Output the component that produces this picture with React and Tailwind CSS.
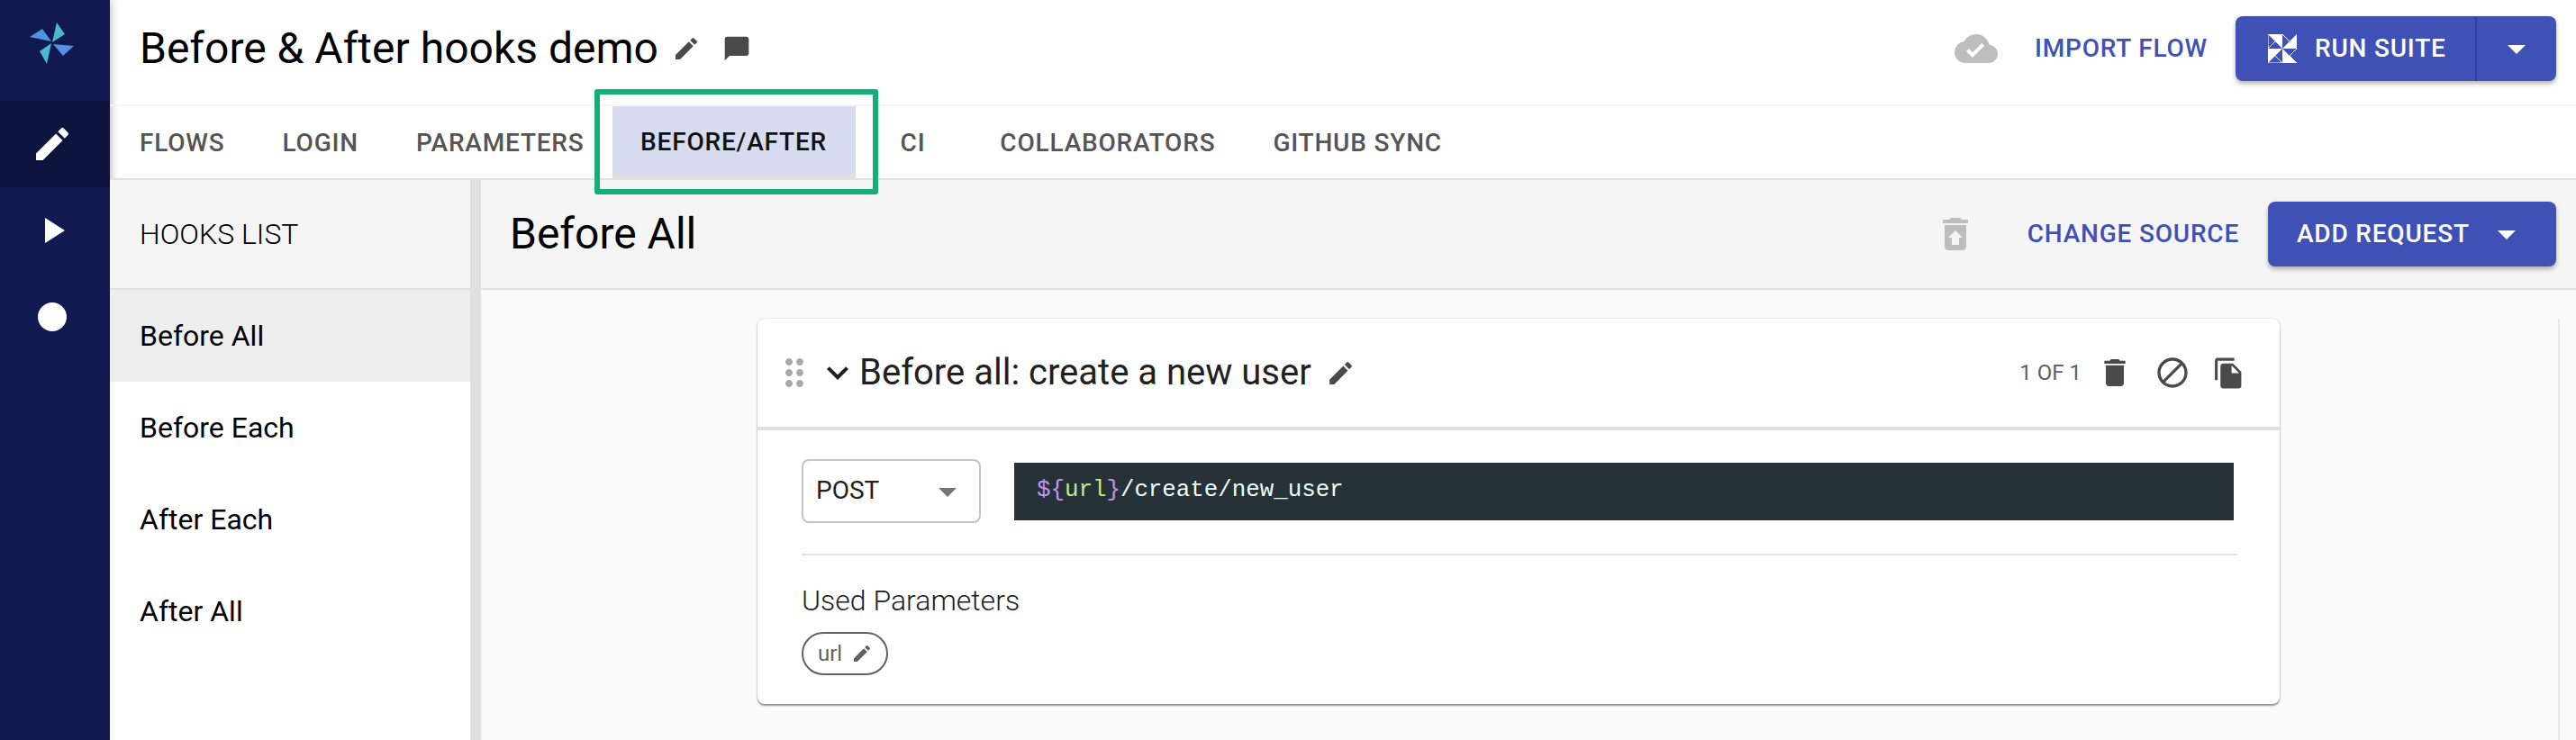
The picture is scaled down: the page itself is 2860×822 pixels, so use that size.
import { MdEdit, MdChatBubble, MdDelete, MdBlock, MdFileCopy, MdRestoreFromTrash, MdExpandMore, MdArrowDropDown, MdCloudDone, MdPlayArrow, MdDragIndicator } from 'react-icons/md'

const tabs = [
  { label: 'FLOWS', margin: 'mr-[64px]' },
  { label: 'LOGIN', margin: 'mr-[64px]' },
  { label: 'PARAMETERS', margin: 'mr-[31px]' },
  { label: 'BEFORE/AFTER', margin: 'mr-[50px]', active: true },
  { label: 'CI', margin: 'mr-[83px]' },
  { label: 'COLLABORATORS', margin: 'mr-[64px]' },
  { label: 'GITHUB SYNC', margin: '' },
]
const hooks = ['Before All', 'Before Each', 'After Each', 'After All']

function Logo() {
  return (
    <svg width="55" height="52" viewBox="30 22 55 52">
      <path d="M63 25 L72 38 L58 47 Z" fill="#4cb8d0" />
      <path d="M33 41 L47 32 L57 46 Z" fill="#5292e2" />
      <path d="M59 49 L82 51 L70 62 Z" fill="#5292e2" />
      <path d="M57 48 L44 57 L52 71 Z" fill="#4cb8d0" />
    </svg>
  )
}

function RunIcon() {
  return (
    <svg width="32" height="32" viewBox="0 0 32 32">
      <path d="M0 0 H16 V16 Z" fill="white" />
      <path d="M32 0 V16 H16 Z" fill="white" />
      <path d="M16 16 L32 32 H16 Z" fill="white" />
      <path d="M0 16 H16 L0 32 Z" fill="white" />
      <path d="M16 0 L24 8 M0 0 L0 16 L8 8 M32 16 L24 24 L32 32 M0 32 H16 L8 24" fill="none" stroke="white" strokeWidth="1" />
    </svg>
  )
}

function Tab({ label, margin, active }) {
  if (active) {
    return (
      <div className={`relative h-[80px] ${margin}`}>
        <div className="flex h-[76px] w-[270px] items-center justify-center bg-[#d7dcf0] pt-[3px] text-[28px] font-medium tracking-[0.8px] text-[#111111]">
          {label}
        </div>
        <div className="h-1 w-[270px] bg-[#e0e0e0]" />
        <div className="absolute -left-[20px] -top-[19px] h-[117px] w-[315px] rounded-[3px] border-[6px] border-[#12b076]" />
      </div>
    )
  }
  return (
    <div className={`flex h-[80px] items-center pt-[1px] text-[28px] font-medium tracking-[0.8px] text-[#555555] ${margin}`}>
      {label}
    </div>
  )
}

function App() {
  return (
    <div className="flex h-[822px] w-[2860px] overflow-hidden bg-white font-['Roboto',sans-serif] text-black">
      <aside className="flex w-[122px] shrink-0 flex-col items-center bg-[#101a50] shadow-[0_0_10px_rgba(0,0,0,0.35)]">
        <div className="flex h-[112px] w-full items-center justify-center pb-4 pr-[7px]">
          <Logo />
        </div>
        <div className="flex h-[96px] w-full items-center justify-center bg-[#0d123e] pr-[6px] text-white">
          <MdEdit size={48} />
        </div>
        <div className="flex h-[96px] w-full items-center justify-center pr-[6px] text-white">
          <MdPlayArrow size={48} />
        </div>
        <div className="flex h-[96px] w-full items-center justify-center pr-[6px]">
          <div className="h-8 w-8 rounded-full bg-white" />
        </div>
      </aside>

      <div className="flex min-w-0 flex-1 flex-col">
        <header className="flex h-[118px] shrink-0 items-center border-b-2 border-[#f5f5f5] pb-2 pl-[33px] pr-[22px]">
          <h1 className="text-[48px] leading-none">Before &amp; After hooks demo</h1>
          <MdEdit size={32} className="ml-[15px] text-[#4a4a4a]" />
          <MdChatBubble size={32} className="ml-6 text-[#4a4a4a]" />
          <MdCloudDone size={48} className="ml-auto text-[#bdbdbd]" />
          <button className="ml-[41px] text-[28px] font-medium tracking-[0.8px] text-[#3f51b5]">IMPORT FLOW</button>
          <div className="ml-[31px] flex h-[72px] w-[356px] items-center rounded-lg bg-[#3f51b5] text-white shadow-[0_3px_5px_rgba(0,0,0,0.3)]">
            <div className="flex h-full flex-1 items-center gap-5 border-r-2 border-[#303f9f] pl-9">
              <RunIcon />
              <span className="text-[28px] font-medium tracking-[0.8px]">RUN SUITE</span>
            </div>
            <div className="flex w-[88px] items-center justify-center">
              <MdArrowDropDown size={48} />
            </div>
          </div>
        </header>

        <nav className="flex h-[82px] shrink-0 border-b-2 border-[#e0e0e0] pl-[33px]">
          {tabs.map((tab) => (
            <Tab key={tab.label} {...tab} />
          ))}
        </nav>

        <div className="flex min-h-0 flex-1">
          <section className="w-[400px] shrink-0 bg-white">
            <div className="flex h-[122px] items-center border-b-2 border-[#e0e0e0] bg-[#f5f5f5] pl-[33px] text-[32px] font-light">
              HOOKS LIST
            </div>
            {hooks.map((hook, i) => (
              <div
                key={hook}
                className={`flex h-[102px] items-center pl-[33px] text-[32px] ${i === 0 ? 'bg-[#eeeeee]' : ''}`}
              >
                {hook}
              </div>
            ))}
          </section>

          <div className="w-3 shrink-0 bg-[#e0e0e0]" />

          <main className="flex min-w-0 flex-1 flex-col bg-[#fafafa]">
            <div className="flex h-[122px] shrink-0 items-center border-b-2 border-[#e0e0e0] bg-[#f5f5f5] pl-[32px] pr-[22px]">
              <h2 className="text-[48px] leading-none">Before All</h2>
              <MdRestoreFromTrash size={48} className="ml-auto text-[#bdbdbd]" />
              <button className="ml-[56px] text-[28px] font-medium tracking-[0.8px] text-[#3f51b5]">CHANGE SOURCE</button>
              <div className="ml-8 flex h-[72px] w-[320px] items-center rounded-lg bg-[#3f51b5] pl-[32px] text-white shadow-[0_3px_5px_rgba(0,0,0,0.3)]">
                <span className="text-[28px] font-medium tracking-[0.8px]">ADD REQUEST</span>
                <MdArrowDropDown size={48} className="ml-[17px]" />
              </div>
            </div>

            <div className="mr-[18px] mt-8 flex flex-1 border-r-2 border-[#e6e6e6]">
              <div className="ml-[307px] h-[428px] w-[1690px] rounded-lg bg-white shadow-[0_2px_2px_rgba(0,0,0,0.4),0_0_2px_rgba(0,0,0,0.2)]">
                <div className="flex h-[124px] items-center border-b-4 border-[#e0e0e0] pl-[17px] pr-[38px]">
                  <MdDragIndicator size={48} className="text-[#a8a8a8]" />
                  <MdExpandMore size={48} className="text-[#212121]" />
                  <span className="text-[40px] leading-none text-[#212121]">Before all: create a new user</span>
                  <MdEdit size={33} className="ml-4 text-[#4a4a4a]" />
                  <span className="ml-auto text-[24px] text-[#616161]">1 OF 1</span>
                  <MdDelete size={40} className="ml-[17px] text-[#4a4a4a]" />
                  <MdBlock size={40} className="ml-6 text-[#4a4a4a]" />
                  <MdFileCopy size={37} className="ml-6 text-[#4a4a4a]" />
                </div>
                <div className="pl-[49px] pr-[47px] pt-8">
                  <div className="flex items-center gap-[37px] border-b-2 border-[#e0e0e0] pb-[34px]">
                    <div className="flex h-[71px] w-[199px] items-center justify-between rounded-lg border-2 border-[#c4c4c4] pl-[14px] pr-[11px]">
                      <span className="pb-[2px] text-[28px] text-[#212121]">POST</span>
                      <MdArrowDropDown size={48} className="text-[#757575]" />
                    </div>
                    <div className="mr-1 flex h-16 flex-1 items-center bg-[#263238] pl-[25px] font-['Liberation_Mono',monospace] text-[25.8px] text-[#eeffff]">
                      <span className="text-[#c792ea]">{'${'}</span>
                      <span className="text-[#c3e88d]">url</span>
                      <span className="text-[#c792ea]">{'}'}</span>
                      <span>/create/new_user</span>
                    </div>
                  </div>
                  <p className="mt-[34px] text-[32px] font-light leading-none text-[#212121]">Used Parameters</p>
                  <div className="mt-[19px] flex h-12 w-[96px] items-center rounded-3xl border-2 border-[#616161] pl-4">
                    <span className="text-[24px] text-[#616161]">url</span>
                    <MdEdit size={24} className="ml-[10px] text-[#616161]" />
                  </div>
                </div>
              </div>
            </div>
          </main>
        </div>
      </div>
    </div>
  )
}

export default App
